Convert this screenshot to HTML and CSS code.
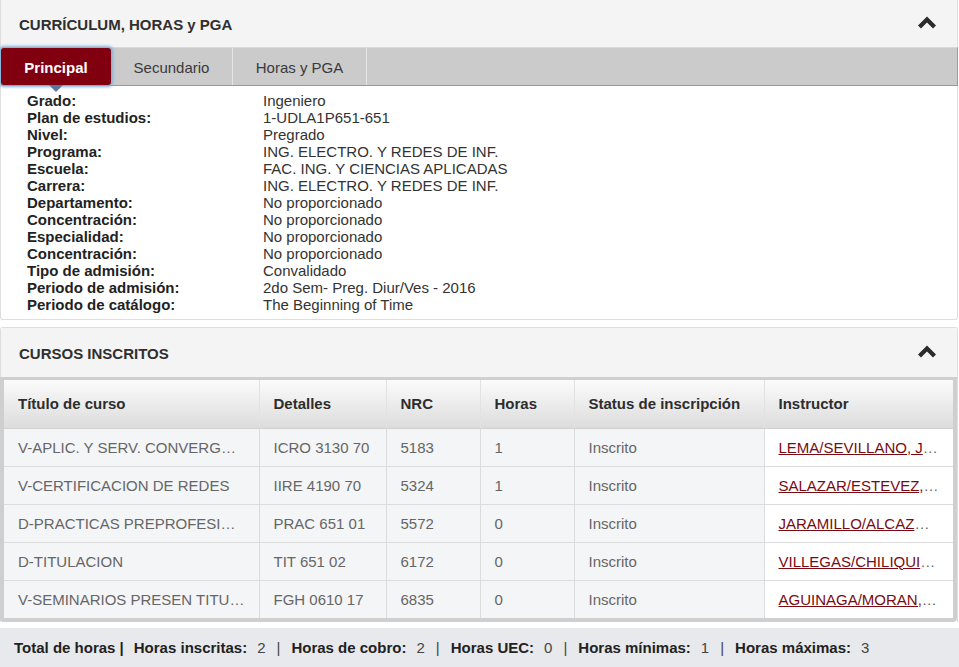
FILE: index.html
```html
<!DOCTYPE html>
<html>
<head>
<meta charset="utf-8">
<link rel="stylesheet" href="styles.css">
</head>
<body>
<section class="panel panel-one">
  <header class="panel-head">
    <h2>CURRÍCULUM, HORAS y PGA</h2>
    <svg class="chev" width="20" height="14" viewBox="0 0 20 14"><polyline points="2.5,11 10,3.5 17.5,11" fill="none" stroke="#2b2b2b" stroke-width="4.2"/></svg>
  </header>
  <nav class="tabs">
    <span class="tab active">Principal</span>
    <span class="tab">Secundario</span>
    <span class="tab">Horas y PGA</span>
  </nav>
  <dl class="details">
    <dt>Grado:</dt><dd>Ingeniero</dd>
    <dt>Plan de estudios:</dt><dd>1-UDLA1P651-651</dd>
    <dt>Nivel:</dt><dd>Pregrado</dd>
    <dt>Programa:</dt><dd>ING. ELECTRO. Y REDES DE INF.</dd>
    <dt>Escuela:</dt><dd>FAC. ING. Y CIENCIAS APLICADAS</dd>
    <dt>Carrera:</dt><dd>ING. ELECTRO. Y REDES DE INF.</dd>
    <dt>Departamento:</dt><dd>No proporcionado</dd>
    <dt>Concentración:</dt><dd>No proporcionado</dd>
    <dt>Especialidad:</dt><dd>No proporcionado</dd>
    <dt>Concentración:</dt><dd>No proporcionado</dd>
    <dt>Tipo de admisión:</dt><dd>Convalidado</dd>
    <dt>Periodo de admisión:</dt><dd>2do Sem- Preg. Diur/Ves - 2016</dd>
    <dt>Periodo de catálogo:</dt><dd>The Beginning of Time</dd>
  </dl>
</section>

<section class="panel panel-two">
  <header class="panel-head head-two">
    <h2>CURSOS INSCRITOS</h2>
    <svg class="chev" width="20" height="14" viewBox="0 0 20 14"><polyline points="2.5,11 10,3.5 17.5,11" fill="none" stroke="#2b2b2b" stroke-width="4.2"/></svg>
  </header>
  <div class="table-wrap">
    <table class="courses">
      <colgroup>
        <col class="c1"><col class="c2"><col class="c3"><col class="c4"><col class="c5"><col class="c6">
      </colgroup>
      <thead>
        <tr><th>Título de curso</th><th>Detalles</th><th>NRC</th><th>Horas</th><th>Status de inscripción</th><th>Instructor</th></tr>
      </thead>
      <tbody>
        <tr><td>V-APLIC. Y SERV. CONVERGENTES</td><td>ICRO 3130 70</td><td>5183</td><td>1</td><td>Inscrito</td><td class="inst"><a href="#">LEMA/SEVILLANO, JOSE</a></td></tr>
        <tr><td>V-CERTIFICACION DE REDES</td><td>IIRE 4190 70</td><td>5324</td><td>1</td><td>Inscrito</td><td class="inst"><a href="#">SALAZAR/ESTEVEZ, LUIS</a></td></tr>
        <tr><td>D-PRACTICAS PREPROFESIONALES</td><td>PRAC 651 01</td><td>5572</td><td>0</td><td>Inscrito</td><td class="inst"><a href="#">JARAMILLO/ALCAZAR, ANGEL</a></td></tr>
        <tr><td>D-TITULACION</td><td>TIT 651 02</td><td>6172</td><td>0</td><td>Inscrito</td><td class="inst"><a href="#">VILLEGAS/CHILIQUINGA, ANA</a></td></tr>
        <tr><td>V-SEMINARIOS PRESEN TITULACION</td><td>FGH 0610 17</td><td>6835</td><td>0</td><td>Inscrito</td><td class="inst"><a href="#">AGUINAGA/MORAN, _ PEDRO</a></td></tr>
      </tbody>
    </table>
  </div>
</section>

<footer class="totals">
  <b>Total de horas |</b>
  <b>Horas inscritas:</b><span>2</span><span class="sep">|</span>
  <b>Horas de cobro:</b><span>2</span><span class="sep">|</span>
  <b>Horas UEC:</b><span>0</span><span class="sep">|</span>
  <b>Horas mínimas:</b><span>1</span><span class="sep">|</span>
  <b>Horas máximas:</b><span>3</span>
</footer>
</body>
</html>
```

FILE: styles.css
```css
* { box-sizing: border-box; }
html, body { margin: 0; padding: 0; background: #fff; }
body {
  font-family: "Liberation Sans", Arial, sans-serif;
  font-size: 15px;
  color: #333;
  width: 959px;
}
.panel {
  border: 1px solid #dedede;
  border-radius: 3px;
  background: #fff;
  width: 958px;
}
.panel-one { border-top: none; border-radius: 0 0 3px 3px; height: 320px; }
.panel-head {
  display: flex;
  align-items: center;
  justify-content: space-between;
  background: #f4f4f4;
  height: 47px;
  padding: 0 20px 0 18px;
}
.panel-head h2 {
  margin: 0;
  font-size: 15px;
  font-weight: bold;
  color: #2f2f2f;
  padding-top: 1px;
}
.chev { display: block; margin-top: -1px; }
.tabs {
  display: flex;
  height: 39px;
  background: #cbcbcb;
  border-top: 1px solid #d9d9d9;
  border-bottom: 1px solid #7fa3a6;
  border-right: 1px solid #7fa3a6;
  margin-right: -1px;
}
.tab {
  display: flex;
  align-items: center;
  justify-content: center;
  color: #3a3a3a;
  font-size: 15px;
  border-right: 1px solid #e6e6e6;
  padding-top: 1px;
}
.tab:nth-child(2) { width: 122px; }
.tab:nth-child(3) { width: 134px; }
.tab.active {
  position: relative;
  width: 110px;
  background: #800010;
  color: #fff;
  font-weight: bold;
  border-radius: 3px;
  border: none;
  box-shadow: 0 0 3px 2px #7fb0dc;
  z-index: 1;
}
.tab.active::after {
  content: "";
  position: absolute;
  left: 48px;
  bottom: -7px;
  border-left: 7px solid transparent;
  border-right: 7px solid transparent;
  border-top: 7px solid #5878a0;
}
.details {
  display: grid;
  grid-template-columns: 236px 1fr;
  margin: 6px 0 0 26px;
  line-height: 17px;
}
.details dt { font-weight: bold; color: #222; }
.details dd { margin: 0; color: #333; }

.panel-two { margin-top: 7px; border-bottom: none; border-radius: 3px 3px 0 0; }
.head-two { height: 49px; }
.table-wrap {
  border: 4px solid #cfcfcf;
  border-top-width: 3px;
  border-radius: 0 0 4px 4px;
  width: 957px;
  margin-left: -1px;
}
.courses {
  width: 949px;
  table-layout: fixed;
  border-collapse: collapse;
}
.c1 { width: 255px; } .c2 { width: 127px; } .c3 { width: 94px; }
.c4 { width: 94px; } .c5 { width: 190px; } .c6 { width: 189px; }
.courses th {
  height: 48px;
  text-align: left;
  font-weight: bold;
  color: #2d2d2d;
  padding: 0 14px;
  background: linear-gradient(#fbfbfb, #dcdcdc);
  border-left: 1px solid #e2e2e2;
  border-bottom: 1px solid #d2d2d2;
}
.courses th:first-child, .courses td:first-child { border-left: none; }
.courses td {
  height: 38px;
  padding: 0 14px;
  color: #666;
  background: #f4f5f7;
  border-left: 1px solid #dcdcdc;
  border-top: 1px solid #dcdcdc;
  white-space: nowrap;
  overflow: hidden;
  text-overflow: ellipsis;
}
.courses tbody tr:first-child td { border-top: none; }
.courses td.inst { background: #fff; }
.courses td a { color: #7a0a12; text-decoration: underline; }

.totals {
  margin-top: 6px;
  background: #e8e9ec;
  height: 39px;
  display: flex;
  align-items: center;
  padding-left: 14px;
  color: #444;
  font-size: 15px;
}
.totals b { color: #222; margin-right: 10px; }
.totals .sep { margin: 0 11px; }
```
